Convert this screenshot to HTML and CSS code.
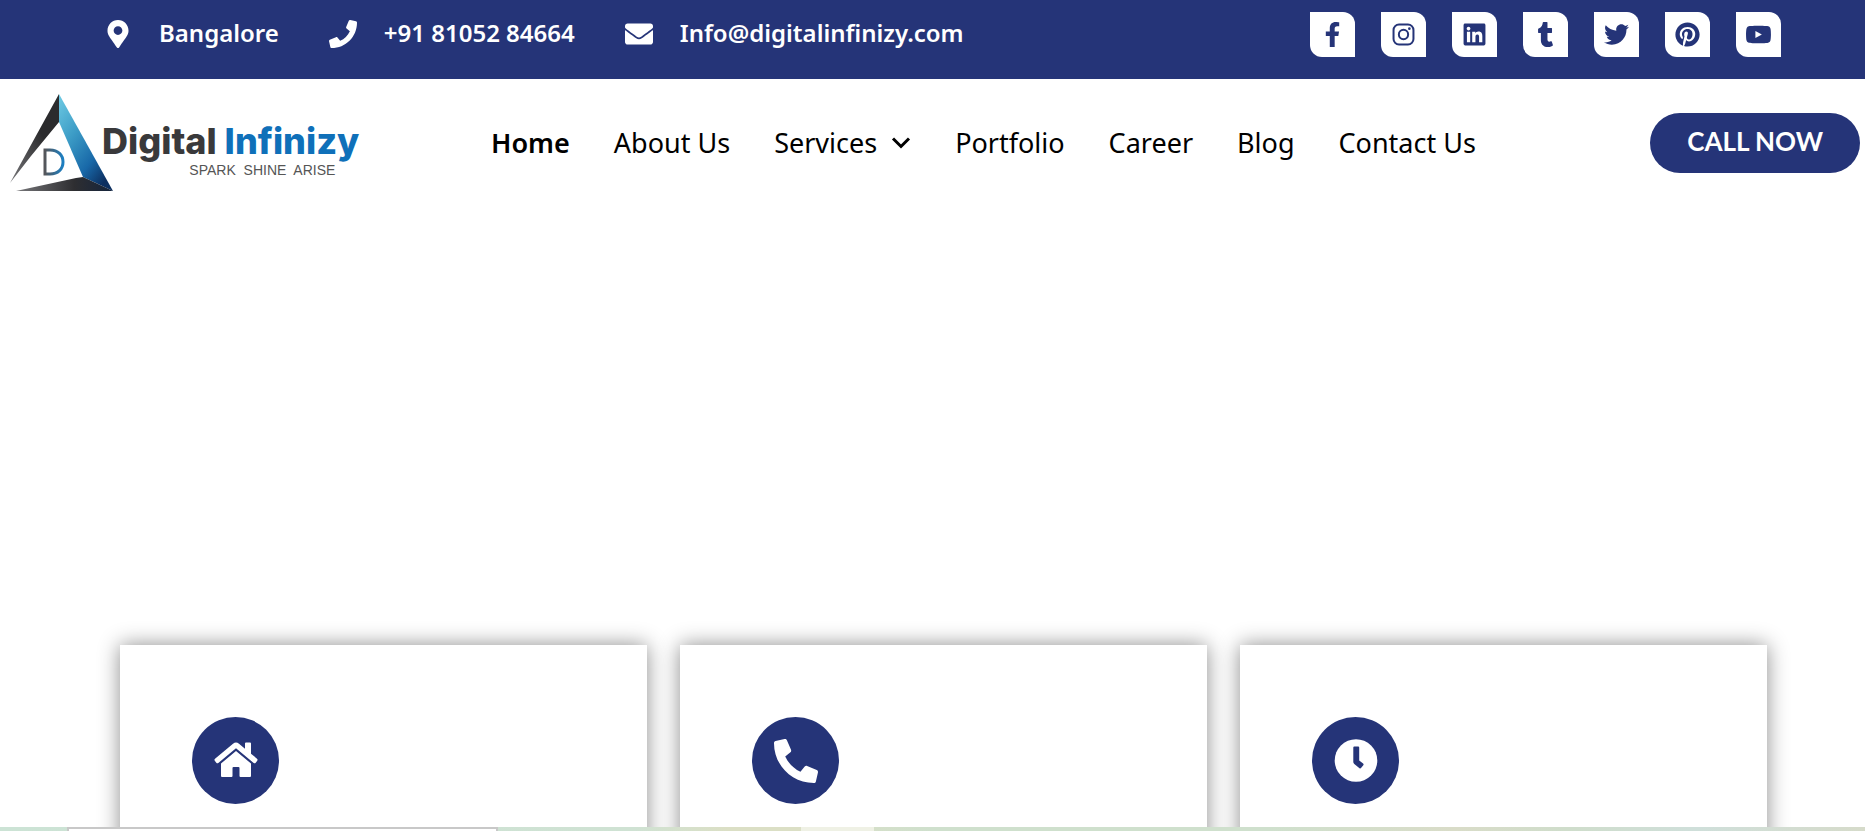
FILE: index.html
```
<!DOCTYPE html>
<html lang="en">
<head>
<meta charset="utf-8">
<meta name="viewport" content="width=device-width, initial-scale=1">
<title>Digital Infinizy</title>
<link rel="stylesheet" href="styles.css">
</head>
<body>
<div class="page">
  <div class="topbar">
    <ul class="contacts">
      <li class="contact">
        <svg class="contact-icon" viewBox="-64 0 512 512" aria-hidden="true"><path d="M172.268 501.67C26.97 291.031 0 269.413 0 192 0 85.961 85.961 0 192 0s192 85.961 192 192c0 77.413-26.97 99.031-172.268 309.67-9.535 13.774-29.93 13.773-39.464 0zM192 272c44.183 0 80-35.817 80-80s-35.817-80-80-80-80 35.817-80 80 35.817 80 80 80z"/></svg>
        <span class="contact-text">Bangalore</span>
      </li>
      <li class="contact">
        <svg class="contact-icon" viewBox="0 0 512 512" aria-hidden="true"><path d="M493.4 24.6l-104-24c-11.3-2.6-22.9 3.3-27.5 13.9l-48 112c-4.2 9.8-1.4 21.3 6.9 28l60.6 49.6c-36 76.7-98.9 140.5-177.2 177.2l-49.6-60.6c-6.8-8.3-18.2-11.1-28-6.9l-112 48C3.9 366.5-2 378.1.6 389.4l24 104C27.1 504.2 36.7 512 48 512c256.1 0 464-207.5 464-464 0-11.2-7.7-20.9-18.6-23.4z"/></svg>
        <a class="contact-text" href="tel:+918105284664">+91 81052 84664</a>
      </li>
      <li class="contact">
        <svg class="contact-icon" viewBox="0 0 512 512" aria-hidden="true"><path d="M502.3 190.8c3.9-3.1 9.7-.2 9.7 4.7V400c0 26.5-21.5 48-48 48H48c-26.5 0-48-21.5-48-48V195.6c0-5 5.7-7.8 9.7-4.7 22.4 17.4 52.1 39.5 154.1 113.6 21.1 15.4 56.7 47.8 92.2 47.6 35.7.3 72-32.8 92.3-47.6 102-74.1 131.6-96.3 154-113.7zM256 320c23.2.4 56.6-29.2 73.4-41.4 132.7-96.3 142.8-104.7 173.4-128.7 5.8-4.5 9.2-11.5 9.2-18.9v-19c0-26.5-21.5-48-48-48H48c-26.5 0-48 21.5-48 48v19c0 7.4 3.4 14.3 9.2 18.9 30.6 23.9 40.7 32.4 173.4 128.7 16.8 12.2 50.2 41.8 73.4 41.4z"/></svg>
        <a class="contact-text" href="mailto:Info@digitalinfinizy.com">Info@digitalinfinizy.com</a>
      </li>
    </ul>
    <div class="socials">
      <a class="social" href="#" aria-label="Facebook"><svg viewBox="-96 0 512 512"><path d="M279.14 288l14.22-92.66h-88.91v-60.13c0-25.35 12.42-50.06 52.24-50.06h40.42V6.26S260.43 0 225.36 0c-73.22 0-121.08 44.38-121.08 124.72v70.62H22.89V288h81.39v224h100.17V288z"/></svg></a>
      <a class="social" href="#" aria-label="Instagram"><svg viewBox="0 0 512 512"><rect x="52" y="52" width="408" height="408" rx="112" fill="none" stroke="currentColor" stroke-width="41"/><circle cx="256" cy="256" r="95" fill="none" stroke="currentColor" stroke-width="41"/><circle cx="376" cy="136" r="27"/></svg></a>
      <a class="social" href="#" aria-label="LinkedIn"><svg viewBox="-32 0 512 512"><path d="M416 32H31.9C14.3 32 0 46.5 0 64.3v383.4C0 465.5 14.3 480 31.9 480H416c17.6 0 32-14.5 32-32.3V64.3c0-17.8-14.4-32.3-32-32.3zM135.4 416H69V202.2h66.5V416zm-33.2-243c-21.3 0-38.5-17.3-38.5-38.5S80.9 96 102.2 96c21.2 0 38.5 17.3 38.5 38.5 0 21.3-17.2 38.5-38.5 38.5zm282.1 243h-66.4V312c0-24.8-.5-56.7-34.5-56.7-34.6 0-39.9 27-39.9 54.9V416h-66.4V202.2h63.7v29.2h.9c8.9-16.8 30.6-34.5 62.9-34.5 67.2 0 79.7 44.3 79.7 101.9V416z"/></svg></a>
      <a class="social" href="#" aria-label="Tumblr"><svg viewBox="-96 0 512 512"><path d="M309.8 480.3c-13.6 14.5-50 31.7-97.4 31.7-120.8 0-147-88.8-147-140.6v-144H17.9c-5.5 0-10-4.5-10-10v-68c0-7.2 4.5-13.6 11.3-16 62-21.8 81.5-76 84.3-117.1.8-11 6.5-16.3 16.1-16.3h70.9c5.5 0 10 4.5 10 10v115.2h83c5.5 0 10 4.4 10 9.9v81.7c0 5.5-4.5 10-10 10h-83.4V360c0 34.2 23.7 53.6 68 35.8 4.8-1.9 9-3.2 12.7-2.2 3.5.9 5.8 3.4 7.4 7.9l22 64.3c1.8 5 3.3 10.6-.4 14.5z"/></svg></a>
      <a class="social" href="#" aria-label="Twitter"><svg viewBox="0 0 512 512"><path d="M459.37 151.716c.325 4.548.325 9.097.325 13.645 0 138.72-105.583 298.558-298.558 298.558-59.452 0-114.68-17.219-161.137-47.106 8.447.974 16.568 1.299 25.34 1.299 49.055 0 94.213-16.568 130.274-44.832-46.132-.975-84.792-31.188-98.112-72.772 6.498.974 12.995 1.624 19.818 1.624 9.421 0 18.843-1.3 27.614-3.573-48.081-9.747-84.143-51.98-84.143-102.985v-1.299c13.969 7.797 30.214 12.67 47.431 13.319-28.264-18.843-46.781-51.005-46.781-87.391 0-19.492 5.197-37.36 14.294-52.954 51.655 63.675 129.3 105.258 216.365 109.807-1.624-7.797-2.599-15.918-2.599-24.04 0-57.828 46.782-104.934 104.934-104.934 30.213 0 57.502 12.67 76.67 33.137 23.715-4.548 46.456-13.32 66.599-25.34-7.798 24.366-24.366 44.833-46.132 57.827 21.117-2.273 41.584-8.122 60.426-16.243-14.292 20.791-32.161 39.308-52.628 54.253z"/></svg></a>
      <a class="social" href="#" aria-label="Pinterest"><svg viewBox="-8 0 512 512"><path d="M496 256c0 137-111 248-248 248-25.6 0-50.2-3.9-73.4-11.1 10.1-16.5 25.2-43.5 30.8-65 3-11.6 15.4-59 15.4-59 8.1 15.4 31.7 28.5 56.8 28.5 74.8 0 128.7-68.8 128.7-154.3 0-81.9-66.9-143.2-152.9-143.2-107 0-163.9 71.8-163.9 150.1 0 36.4 19.4 81.7 50.3 96.1 4.7 2.2 7.2 1.2 8.3-3.3.8-3.4 5-20.3 6.9-28.1.6-2.5.3-4.7-1.7-7.1-10.1-12.5-18.3-35.3-18.3-56.6 0-54.7 41.4-107.6 112-107.6 60.9 0 103.6 41.5 103.6 100.9 0 67.1-33.9 113.6-78 113.6-24.3 0-42.6-20.1-36.7-44.8 7-29.5 20.5-61.3 20.5-82.6 0-19-10.2-34.9-31.4-34.9-24.9 0-44.9 25.7-44.9 60.2 0 22 7.4 36.8 7.4 36.8s-24.5 103.8-29 123.2c-5 21.4-3 51.6-.9 71.2C65.4 450.9 0 361.1 0 256 0 119 111 8 248 8s248 111 248 248z"/></svg></a>
      <a class="social" href="#" aria-label="YouTube"><svg viewBox="14 -18 548 548"><path d="M549.655 124.083c-6.281-23.65-24.787-42.276-48.284-48.597C458.781 64 288 64 288 64S117.22 64 74.629 75.486c-23.497 6.322-42.003 24.947-48.284 48.597-11.412 42.867-11.412 132.305-11.412 132.305s0 89.438 11.412 132.305c6.281 23.65 24.787 41.5 48.284 47.821C117.22 448 288 448 288 448s170.78 0 213.371-11.486c23.497-6.321 42.003-24.171 48.284-47.821 11.412-42.867 11.412-132.305 11.412-132.305s0-89.438-11.412-132.305zM220 332V180l142 76z"/></svg></a>
    </div>
  </div>

  <header class="header">
    <a class="logo" href="#" aria-label="Digital Infinizy">
      <svg class="logo-mark" viewBox="0 0 104 99" aria-hidden="true">
        <defs>
          <linearGradient id="blue" x1="0" y1="0" x2="0.7" y2="1"><stop offset="0" stop-color="#6fcbe4"/><stop offset="0.4" stop-color="#3c9cc6"/><stop offset="0.75" stop-color="#1868a8"/><stop offset="1" stop-color="#0c2f60"/></linearGradient>
          <linearGradient id="dark" x1="1" y1="0" x2="0" y2="1"><stop offset="0.4" stop-color="#2b2b2d"/><stop offset="1" stop-color="#77777a"/></linearGradient>
          <linearGradient id="base" x1="0" y1="0" x2="1" y2="0"><stop offset="0" stop-color="#77777a"/><stop offset="0.6" stop-color="#2e2e31"/><stop offset="1" stop-color="#14243c"/></linearGradient>
          <linearGradient id="letter" x1="0" y1="0" x2="1" y2="0"><stop offset="0" stop-color="#55565a"/><stop offset="1" stop-color="#1c7fc2"/></linearGradient>
        </defs>
        <path d="M49 1V29L21 63 0 90z" fill="url(#dark)"/>
        <path d="M49 1L103 98 73 84 49 29z" fill="url(#blue)"/>
        <path d="M6 98L66 85 73 84 103 98z" fill="url(#base)"/>
        <path d="M35 57h5c8 0 13 5 13 12s-5 12-13 12h-5z" fill="none" stroke="url(#letter)" stroke-width="3"/>
      </svg>
      <span class="logo-text">
        <span class="wordmark">Digital <span class="wordmark-accent">Infinizy</span></span>
        <span class="tagline">SPARK&nbsp; SHINE&nbsp; ARISE</span>
      </span>
    </a>
    <nav class="nav" aria-label="Main">
      <a class="nav-link is-current" href="#">Home</a>
      <a class="nav-link" href="#">About Us</a>
      <a class="nav-link" href="#">Services <svg class="chevron" viewBox="0 0 20 12" aria-hidden="true"><path d="M2 1.500L10 9.500L18 1.500" fill="none" stroke="currentColor" stroke-width="3"/></svg></a>
      <a class="nav-link" href="#">Portfolio</a>
      <a class="nav-link" href="#">Career</a>
      <a class="nav-link" href="#">Blog</a>
      <a class="nav-link" href="#">Contact Us</a>
    </nav>
    <a class="call" href="tel:+918105284664">CALL NOW</a>
  </header>

  <main class="content">
    <section class="cards">
      <article class="card">
        <span class="badge"><svg viewBox="0 0 44 38" aria-hidden="true"><path d="M22 0.500q1.500 0 3 1.200l6 5V1.500q0-1 1-1h4q1 0 1 1v10.200l6 5q1 1 .2 2l-1.500 2q-1 1-2 .2L22 6.200 4.300 20.900q-1 .8-2-.2l-1.500-2q-.8-1 .2-2L19 1.700Q20.500.5 22 .5z"/><path d="M22 9L37 21.500v12.500q0 1-1 1H26.500q-1 0-1-1v-8q0-1-1-1h-5q-1 0-1 1v8q0 1-1 1H8q-1 0-1-1V21.500z"/></svg></span>
      </article>
      <article class="card">
        <span class="badge"><svg viewBox="0 0 512 512" aria-hidden="true"><path transform="matrix(-1 0 0 1 512 0)" d="M493.4 24.6l-104-24c-11.3-2.6-22.9 3.3-27.5 13.9l-48 112c-4.2 9.8-1.4 21.3 6.9 28l60.6 49.6c-36 76.7-98.9 140.5-177.2 177.2l-49.6-60.6c-6.8-8.3-18.2-11.1-28-6.9l-112 48C3.9 366.5-2 378.1.6 389.4l24 104C27.1 504.2 36.7 512 48 512c256.1 0 464-207.5 464-464 0-11.2-7.7-20.9-18.6-23.4z"/></svg></span>
      </article>
      <article class="card">
        <span class="badge"><svg viewBox="0 0 44 44" aria-hidden="true"><circle cx="22" cy="21.500" r="21.300"/><path d="M19.300 8.500q0-1 1-1h3.900q1 0 1 1V21.500l3.900 3.100q.9.700.2 1.600l-2.300 2.900q-.6.800-1.500.1L20.300 25q-1-.8-1-2z" fill="#253478"/></svg></span>
      </article>
    </section>
  </main>

  <div class="strip" aria-hidden="true">
    <span class="strip-field"></span>
    <span class="strip-tab"></span>
  </div>
</div>
</body>
</html>
```

FILE: styles.css
```
* {
  box-sizing: border-box;
}

body {
  margin: 0;
  background: #fff;
  color: #000;
  font-family: "Noto Sans", "Open Sans", sans-serif;
}

a {
  color: inherit;
  text-decoration: none;
}

svg {
  display: block;
  fill: currentColor;
}

.page {
  display: flex;
  flex-direction: column;
  height: 100vh;
  overflow: hidden;
}

.topbar {
  display: flex;
  align-items: flex-start;
  justify-content: space-between;
  padding: 12px 84px 22px 104px;
  background: #253478;
  color: #fff;
}

.contacts {
  display: flex;
  gap: 50px;
  margin: 0;
  padding: 0;
  list-style: none;
}

.contact {
  display: flex;
  align-items: center;
  gap: 27px;
  height: 44px;
  font-size: 24px;
  font-weight: 600;
}

.contact-text {
  padding-bottom: 4px;
}

.contact-icon {
  width: 28px;
  height: 28px;
}

.socials {
  display: flex;
  gap: 26px;
}

.social {
  display: grid;
  place-items: center;
  width: 45px;
  height: 45px;
  border-radius: 0 12px;
  background: #fff;
  color: #253478;
}

.social svg {
  width: 25px;
  height: 25px;
}

.header {
  display: flex;
  align-items: center;
  padding: 14px 5px 14px 10px;
}

.logo {
  display: flex;
  width: 348px;
}

.logo-mark {
  flex: none;
  width: 104px;
  height: 99px;
}

.logo-text {
  display: flex;
  flex-direction: column;
  margin-left: -12px;
  padding-top: 27px;
  white-space: nowrap;
}

.wordmark {
  color: #39393b;
  font-family: Inter, sans-serif;
  font-size: 36px;
  font-weight: 800;
  line-height: 42px;
}

.wordmark-accent {
  color: #0f70b9;
}

.tagline {
  align-self: flex-end;
  margin-right: 24px;
  color: #555;
  font-family: "Liberation Sans", Arial, sans-serif;
  font-size: 14px;
  line-height: 16px;
}

.nav {
  display: flex;
  gap: 44px;
  margin-left: 133px;
}

.nav-link {
  display: flex;
  align-items: center;
  gap: 14px;
  font-size: 27px;
  line-height: 40px;
  white-space: nowrap;
}

.is-current {
  font-weight: 600;
}

.chevron {
  width: 20px;
  height: 12px;
}

.call {
  margin-left: auto;
  padding: 0 37px 4px;
  border-radius: 30px;
  background: #253478;
  color: #fff;
  font-family: Lato, sans-serif;
  font-size: 26px;
  font-weight: 700;
  line-height: 56px;
  white-space: nowrap;
}

.content {
  flex: 1;
  min-height: 0;
  padding-top: 419px;
  overflow: hidden;
}

.cards {
  display: grid;
  grid-template-columns: repeat(3, 1fr);
  gap: 33px;
  padding: 20px 98px 0 120px;
}

.card {
  min-height: 320px;
  padding: 72px;
  background: #fff;
  box-shadow: 0 0 20px rgba(0, 0, 0, 0.45);
}

.badge {
  display: grid;
  place-items: center;
  width: 87px;
  height: 87px;
  border-radius: 50%;
  background: #253478;
  color: #fff;
}

.badge svg {
  width: 44px;
}

.strip {
  display: flex;
  flex: none;
  height: 4px;
  padding-left: 67px;
  background: linear-gradient(90deg, #cce3d5 0%, #cfe2d3 34%, #dbdfc5 39%, #dbdfc5 43%, #cfe0cd 50%, #cfe0cd 68%, #d9dcc8 78%, #cfddcb 84%, #cfdfda 91%, #d6dbca 100%);
}

.strip-field {
  width: 431px;
  border: 2px solid #c8c8c8;
  border-bottom: 0;
  background: #fff;
}

.strip-tab {
  width: 73px;
  margin-left: 303px;
  background: #eff1e5;
}
```
